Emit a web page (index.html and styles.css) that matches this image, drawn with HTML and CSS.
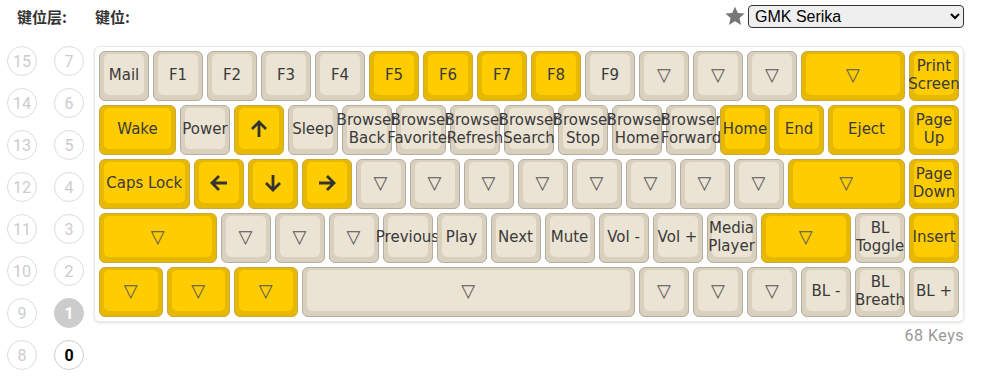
FILE: index.html
```html
<!DOCTYPE html>
<html lang="zh">
<head>
    <meta charset="UTF-8">
    <title>Keymap</title>
    <link rel="stylesheet" href="styles.css">
</head>
<body>
    <div class="header">
        <span class="label label-layer">键位层:</span>
        <span class="label">键位:</span>
        <div class="theme">
            <svg class="star" width="22" height="22" viewBox="0 0 24 24"><path d="M12 1.8l3.1 7 7.4.6-5.6 4.9 1.7 7.4L12 17.8l-6.6 3.9 1.7-7.4L1.5 9.4l7.4-.6z" fill="#777"/></svg>
            <select class="theme-select">
                <option>GMK Serika</option>
            </select>
        </div>
    </div>

    <div class="main">
        <div class="layers">
            <div class="layer">15</div><div class="layer">7</div>
            <div class="layer">14</div><div class="layer">6</div>
            <div class="layer">13</div><div class="layer">5</div>
            <div class="layer">12</div><div class="layer">4</div>
            <div class="layer">11</div><div class="layer">3</div>
            <div class="layer">10</div><div class="layer">2</div>
            <div class="layer">9</div><div class="layer active">1</div>
            <div class="layer">8</div><div class="layer current">0</div>
        </div>

        <div class="board-wrap">
            <div class="board">
                <!-- row 1 -->
                <div class="row">
                    <div class="cell"><div class="key"><div class="cap">Mail</div></div></div>
                    <div class="cell"><div class="key"><div class="cap">F1</div></div></div>
                    <div class="cell"><div class="key"><div class="cap">F2</div></div></div>
                    <div class="cell"><div class="key"><div class="cap">F3</div></div></div>
                    <div class="cell"><div class="key"><div class="cap">F4</div></div></div>
                    <div class="cell"><div class="key mod"><div class="cap">F5</div></div></div>
                    <div class="cell"><div class="key mod"><div class="cap">F6</div></div></div>
                    <div class="cell"><div class="key mod"><div class="cap">F7</div></div></div>
                    <div class="cell"><div class="key mod"><div class="cap">F8</div></div></div>
                    <div class="cell"><div class="key"><div class="cap">F9</div></div></div>
                    <div class="cell"><div class="key"><div class="cap tri">▽</div></div></div>
                    <div class="cell"><div class="key"><div class="cap tri">▽</div></div></div>
                    <div class="cell"><div class="key"><div class="cap tri">▽</div></div></div>
                    <div class="cell w2"><div class="key mod"><div class="cap tri">▽</div></div></div>
                    <div class="cell"><div class="key mod"><div class="cap">Print<br>Screen</div></div></div>
                </div>
                <!-- row 2 -->
                <div class="row">
                    <div class="cell w15"><div class="key mod"><div class="cap">Wake</div></div></div>
                    <div class="cell"><div class="key"><div class="cap">Power</div></div></div>
                    <div class="cell"><div class="key mod"><div class="cap">
                        <svg width="20" height="20" viewBox="0 0 20 20"><path d="M10 18V3M3 10l7-7 7 7" fill="none" stroke="#333" stroke-width="2.8"/></svg>
                    </div></div></div>
                    <div class="cell"><div class="key"><div class="cap">Sleep</div></div></div>
                    <div class="cell"><div class="key"><div class="cap">Browser<br>Back</div></div></div>
                    <div class="cell"><div class="key"><div class="cap">Browser<br>Favorites</div></div></div>
                    <div class="cell"><div class="key"><div class="cap">Browser<br>Refresh</div></div></div>
                    <div class="cell"><div class="key"><div class="cap">Browser<br>Search</div></div></div>
                    <div class="cell"><div class="key"><div class="cap">Browser<br>Stop</div></div></div>
                    <div class="cell"><div class="key"><div class="cap">Browser<br>Home</div></div></div>
                    <div class="cell"><div class="key"><div class="cap">Browser<br>Forward</div></div></div>
                    <div class="cell"><div class="key mod"><div class="cap">Home</div></div></div>
                    <div class="cell"><div class="key mod"><div class="cap">End</div></div></div>
                    <div class="cell w15"><div class="key mod"><div class="cap">Eject</div></div></div>
                    <div class="cell"><div class="key mod"><div class="cap">Page<br>Up</div></div></div>
                </div>
                <!-- row 3 -->
                <div class="row">
                    <div class="cell w175"><div class="key mod"><div class="cap">Caps Lock</div></div></div>
                    <div class="cell"><div class="key mod"><div class="cap">
                        <svg width="20" height="20" viewBox="0 0 20 20"><path d="M18 10H3M10 3l-7 7 7 7" fill="none" stroke="#333" stroke-width="2.8"/></svg>
                    </div></div></div>
                    <div class="cell"><div class="key mod"><div class="cap">
                        <svg width="20" height="20" viewBox="0 0 20 20"><path d="M10 2v15M3 10l7 7 7-7" fill="none" stroke="#333" stroke-width="2.8"/></svg>
                    </div></div></div>
                    <div class="cell"><div class="key mod"><div class="cap">
                        <svg width="20" height="20" viewBox="0 0 20 20"><path d="M2 10h15M10 3l7 7-7 7" fill="none" stroke="#333" stroke-width="2.8"/></svg>
                    </div></div></div>
                    <div class="cell"><div class="key"><div class="cap tri">▽</div></div></div>
                    <div class="cell"><div class="key"><div class="cap tri">▽</div></div></div>
                    <div class="cell"><div class="key"><div class="cap tri">▽</div></div></div>
                    <div class="cell"><div class="key"><div class="cap tri">▽</div></div></div>
                    <div class="cell"><div class="key"><div class="cap tri">▽</div></div></div>
                    <div class="cell"><div class="key"><div class="cap tri">▽</div></div></div>
                    <div class="cell"><div class="key"><div class="cap tri">▽</div></div></div>
                    <div class="cell"><div class="key"><div class="cap tri">▽</div></div></div>
                    <div class="cell w225"><div class="key mod"><div class="cap tri">▽</div></div></div>
                    <div class="cell"><div class="key mod"><div class="cap">Page<br>Down</div></div></div>
                </div>
                <!-- row 4 -->
                <div class="row">
                    <div class="cell w225"><div class="key mod"><div class="cap tri">▽</div></div></div>
                    <div class="cell"><div class="key"><div class="cap tri">▽</div></div></div>
                    <div class="cell"><div class="key"><div class="cap tri">▽</div></div></div>
                    <div class="cell"><div class="key"><div class="cap tri">▽</div></div></div>
                    <div class="cell"><div class="key"><div class="cap">Previous</div></div></div>
                    <div class="cell"><div class="key"><div class="cap">Play</div></div></div>
                    <div class="cell"><div class="key"><div class="cap">Next</div></div></div>
                    <div class="cell"><div class="key"><div class="cap">Mute</div></div></div>
                    <div class="cell"><div class="key"><div class="cap">Vol -</div></div></div>
                    <div class="cell"><div class="key"><div class="cap">Vol +</div></div></div>
                    <div class="cell"><div class="key"><div class="cap">Media<br>Player</div></div></div>
                    <div class="cell w175"><div class="key mod"><div class="cap tri">▽</div></div></div>
                    <div class="cell"><div class="key"><div class="cap">BL<br>Toggle</div></div></div>
                    <div class="cell"><div class="key mod"><div class="cap">Insert</div></div></div>
                </div>
                <!-- row 5 -->
                <div class="row">
                    <div class="cell w125"><div class="key mod"><div class="cap tri">▽</div></div></div>
                    <div class="cell w125"><div class="key mod"><div class="cap tri">▽</div></div></div>
                    <div class="cell w125"><div class="key mod"><div class="cap tri">▽</div></div></div>
                    <div class="cell w625"><div class="key"><div class="cap tri">▽</div></div></div>
                    <div class="cell"><div class="key"><div class="cap tri">▽</div></div></div>
                    <div class="cell"><div class="key"><div class="cap tri">▽</div></div></div>
                    <div class="cell"><div class="key"><div class="cap tri">▽</div></div></div>
                    <div class="cell"><div class="key"><div class="cap">BL -</div></div></div>
                    <div class="cell"><div class="key"><div class="cap">BL<br>Breath</div></div></div>
                    <div class="cell"><div class="key"><div class="cap">BL +</div></div></div>
                </div>
            </div>
            <div class="key-count">68 Keys</div>
        </div>
    </div>
</body>
</html>
```

FILE: styles.css
```css
body {
    margin: 0;
    font-family: Roboto, "Noto Sans", "Noto Sans CJK SC", sans-serif;
    color: #333;
    background: #fff;
}

/* Header */
.header {
    display: flex;
    align-items: center;
    height: 32px;
    padding: 0 19px 0 17px;
}

.label {
    font-family: "Noto Sans CJK SC", sans-serif;
    font-weight: bold;
    font-size: 15px;
    color: #333;
}

.label-layer {
    width: 78px;
}

.theme {
    margin-left: auto;
    display: flex;
    align-items: center;
    gap: 2px;
}

.star {
    display: block;
}

.theme-select {
    width: 216px;
    height: 23px;
    font-family: "Liberation Sans", Arial, sans-serif;
    font-size: 16px;
    color: #000;
    background: #efefef;
    border: 1px solid #333;
    border-radius: 4px;
    padding: 0 2px;
}

/* Main */
.main {
    display: flex;
    padding-top: 14px;
}

.layers {
    display: grid;
    grid-template-columns: 30px 30px;
    grid-auto-rows: 30px;
    column-gap: 17px;
    row-gap: 12px;
    padding: 0 0 0 7px;
    width: 87px;
}

.layer {
    box-sizing: border-box;
    border: 1px solid #ddd;
    border-radius: 50%;
    display: flex;
    align-items: center;
    justify-content: center;
    font-size: 16px;
    color: #ccc;
}

.layer.active {
    background: #ccc;
    border-color: #ccc;
    color: #fff;
    font-weight: bold;
}

.layer.current {
    color: #000;
    font-weight: bold;
    border-color: #ccc;
}

/* Keyboard */
.board {
    width: 864px;
    padding: 2px;
    border: 1px solid #e8e8e8;
    border-radius: 5px;
    box-shadow: 0 1px 3px rgba(0, 0, 0, 0.12);
}

.row {
    display: flex;
}

.cell {
    width: 54px;
    height: 54px;
    padding: 2px;
    box-sizing: border-box;
}

.w125 { width: 67.5px; }
.w15 { width: 81px; }
.w175 { width: 94.5px; }
.w2 { width: 108px; }
.w225 { width: 121.5px; }
.w625 { width: 337.5px; }

.key {
    height: 100%;
    box-sizing: border-box;
    border: 1px solid #b5ada0;
    border-radius: 6px;
    background: #d9d0bd;
    padding: 2px 4px 5px 4px;
}

.cap {
    height: 100%;
    border-radius: 5px;
    background: #ebe3d3;
    display: flex;
    align-items: center;
    justify-content: center;
    text-align: center;
    white-space: nowrap;
    font-family: "DejaVu Sans", sans-serif;
    font-size: 15px;
    line-height: 18px;
    color: #3a3a3a;
}

.key.mod {
    background: #e6b900;
    border-color: #c9a840;
}

.key.mod .cap {
    background: #ffcc00;
}

.cap.tri {
    font-size: 18px;
    color: #555;
}

.cap svg {
    display: block;
}

.key-count {
    text-align: right;
    font-size: 16px;
    color: #999;
    letter-spacing: 0.5px;
    padding-top: 4px;
}
```
